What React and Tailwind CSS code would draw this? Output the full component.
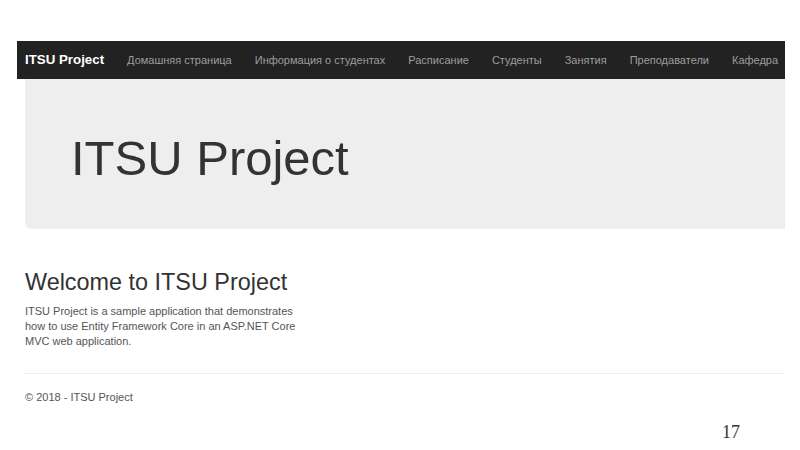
import React from 'react';

const navItems = [
  'Домашняя страница',
  'Информация о студентах',
  'Расписание',
  'Студенты',
  'Занятия',
  'Преподаватели',
  'Кафедра',
];

const App = () => {
  return (
    <div className="relative w-[800px] h-[450px] overflow-hidden bg-white pt-[41px] font-['Liberation_Sans',Arial,sans-serif] text-[#333]">
      {/* top navbar */}
      <nav className="ml-[17px] w-[768px] h-[38px] bg-[#222] flex items-center pl-[8px] gap-[23px]">
        <span className="text-white font-bold text-[13.3px]">ITSU Project</span>
        {navItems.map((item) => (
          <span key={item} className="text-[#9d9d9d] text-[11px] whitespace-nowrap">{item}</span>
        ))}
      </nav>

      {/* jumbotron */}
      <div className="ml-[25px] w-[760px] h-[150px] bg-[#eee] rounded-bl-md flex items-center pl-[46px] pt-[8px]">
        <h1 className="text-[49px] leading-none text-[#333]">ITSU Project</h1>
      </div>

      {/* body */}
      <div className="ml-[25px] mt-[39px] w-[760px]">
        <h2 className="text-[23.4px] leading-[28px] text-[#333]">Welcome to ITSU Project</h2>
        <p className="mt-[8px] w-[280px] text-[11px] leading-[15px] text-[#555]">
          ITSU Project is a sample application that demonstrates how to use Entity Framework Core in an ASP.NET Core MVC web application.
        </p>
        <hr className="mt-[24px] -ml-[1px] border-t border-[#eee]" />
        <footer className="mt-[15px] text-[11px] text-[#555]">© 2018 - ITSU Project</footer>
      </div>

      {/* slide number */}
      <span className="absolute left-[722px] top-[419px] font-['Liberation_Serif',serif] text-[18px] text-[#333]">17</span>
    </div>
  );
};

export default App;
